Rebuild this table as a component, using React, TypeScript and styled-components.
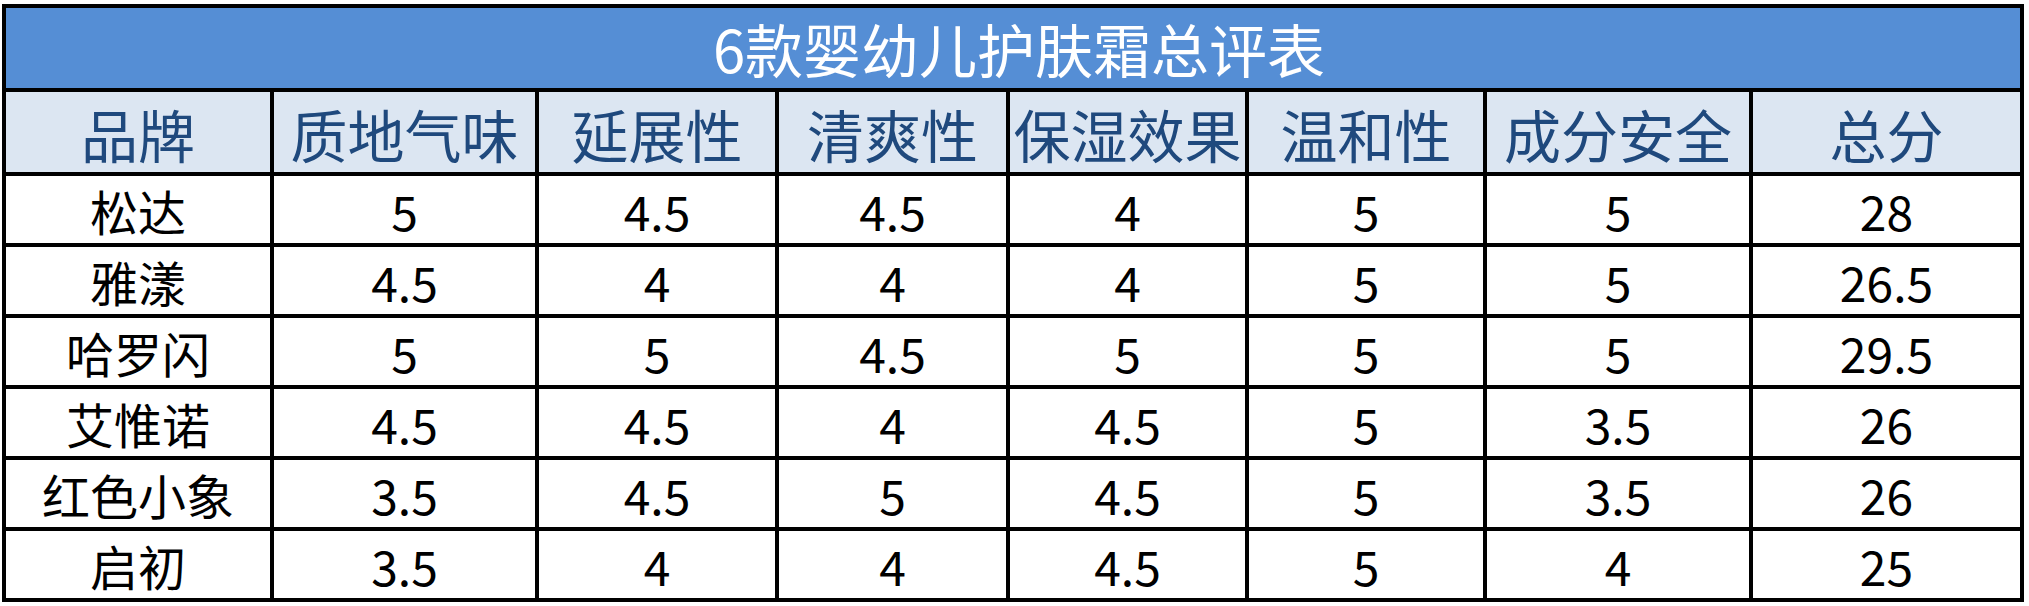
import React from "react";
import styled, { createGlobalStyle } from "styled-components";

const GlobalStyle = createGlobalStyle`
  html, body {
    margin: 0;
    padding: 0;
    background: #ffffff;
  }
  body {
    font-family: "Noto Sans CJK SC", "Noto Sans", sans-serif;
  }
`;

const Page = styled.div`
  padding: 4px 0 0 2px;
`;

const Grid = styled.div`
  display: grid;
  width: 2022px;
  box-sizing: border-box;
  grid-template-columns: 264px 261px 236px 227px 235px 234px 262px 267px;
  grid-template-rows: 80px 80px repeat(6, 67px);
  gap: 4px;
  padding: 4px;
  background: #000000;
`;

const BaseCell = styled.div`
  display: flex;
  align-items: center;
  justify-content: center;
  white-space: nowrap;
  overflow: visible;
  font-family: "Noto Sans CJK SC", "Noto Sans", sans-serif;
`;

const TitleCell = styled(BaseCell)`
  grid-column: 1 / -1;
  background: #558ed5;
  color: #ffffff;
  font-size: 58px;
  padding-left: 12px;
`;

const HeadCell = styled(BaseCell)`
  background: #dce6f2;
  color: #1f497d;
  font-size: 57px;
  padding-top: 2px;
`;

const DataCell = styled(BaseCell)`
  background: #ffffff;
  color: #000000;
  font-size: 48px;
`;

const headers = ["品牌", "质地气味", "延展性", "清爽性", "保湿效果", "温和性", "成分安全", "总分"];

const rows: [string, string[]][] = [
  ["松达", ["5", "4.5", "4.5", "4", "5", "5", "28"]],
  ["雅漾", ["4.5", "4", "4", "4", "5", "5", "26.5"]],
  ["哈罗闪", ["5", "5", "4.5", "5", "5", "5", "29.5"]],
  ["艾惟诺", ["4.5", "4.5", "4", "4.5", "5", "3.5", "26"]],
  ["红色小象", ["3.5", "4.5", "5", "4.5", "5", "3.5", "26"]],
  ["启初", ["3.5", "4", "4", "4.5", "5", "4", "25"]],
];

export default function App() {
  return (
    <>
      <GlobalStyle />
      <Page>
        <Grid>
          <TitleCell>6款婴幼儿护肤霜总评表</TitleCell>
          {headers.map((h) => (
            <HeadCell key={h}>{h}</HeadCell>
          ))}
          {rows.map(([name, vals]) => (
            <React.Fragment key={name}>
              <DataCell>{name}</DataCell>
              {vals.map((v, i) => (
                <DataCell key={i}>{v}</DataCell>
              ))}
            </React.Fragment>
          ))}
        </Grid>
      </Page>
    </>
  );
}
